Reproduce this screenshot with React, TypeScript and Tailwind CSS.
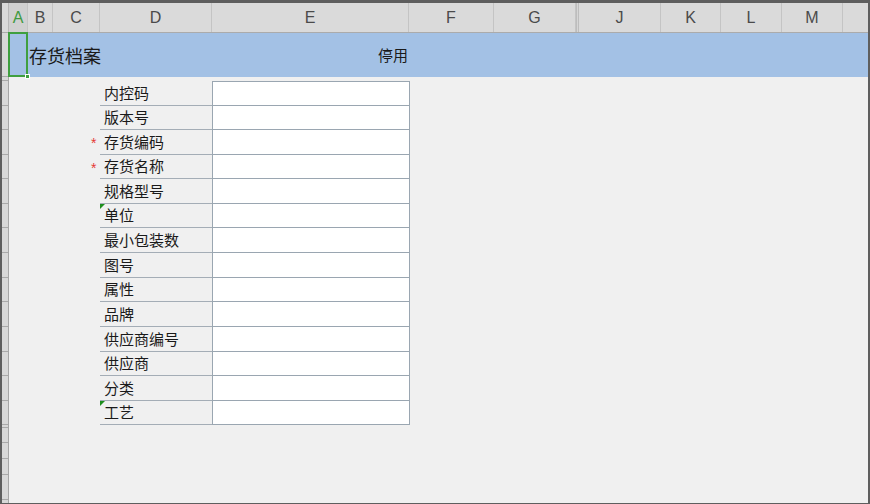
import React from "react";

interface Column {
  name: string;
  width: string;
  selected?: boolean;
}

interface Field {
  label: string;
  required?: boolean;
  noted?: boolean;
}

const columns: Column[] = [
  { name: "A", width: "w-[19px]", selected: true },
  { name: "B", width: "w-[25px]" },
  { name: "C", width: "w-[47px]" },
  { name: "D", width: "w-[112px]" },
  { name: "E", width: "w-[197px]" },
  { name: "F", width: "w-[85px]" },
  { name: "G", width: "w-[82px]" },
  { name: "", width: "w-[3px]" },
  { name: "J", width: "w-[82px]" },
  { name: "K", width: "w-[60px]" },
  { name: "L", width: "w-[61px]" },
  { name: "M", width: "w-[61px]" },
];

const fields: Field[] = [
  { label: "内控码" },
  { label: "版本号" },
  { label: "存货编码", required: true },
  { label: "存货名称", required: true },
  { label: "规格型号" },
  { label: "单位", noted: true },
  { label: "最小包装数" },
  { label: "图号" },
  { label: "属性" },
  { label: "品牌" },
  { label: "供应商编号" },
  { label: "供应商" },
  { label: "分类" },
  { label: "工艺", noted: true },
];

const tall = [true, false, true, false, true, false, true, true, false, true, true, false, true, false];

const cjk = "font-['Noto_Sans_CJK_SC','Noto_Sans',sans-serif]";

function ColumnHeader() {
  return (
    <div className="flex h-[30px] shrink-0 bg-[#dadada] border-b border-[#ababab]">
      <div className="w-[7px] shrink-0 border-r border-[#b8b8b8]" />
      {columns.map((col, idx) =>
        col.name === "" ? (
          <div key={idx} className={`${col.width} shrink-0 border-l border-r border-[#bdbdbd] bg-[#d6d6d6]`} />
        ) : (
          <div
            key={idx}
            className={`${col.width} shrink-0 flex items-center justify-center border-r border-[#c4c4c4] text-[16px] font-['Liberation_Sans',sans-serif] ${
              col.selected ? "bg-[#d0d0d0] text-[#3f9a3f]" : "text-[#4a4a4a]"
            }`}
          >
            {col.name}
          </div>
        )
      )}
      <div className="flex-1" />
    </div>
  );
}

function RowStrip() {
  const segments = [44, 4, ...tall.map((t) => (t ? 25 : 24)), 3, 15, 16, 16, 25];
  return (
    <div className="w-[7px] shrink-0 flex flex-col bg-[#d8d8d8] border-r border-[#a6a6a6]">
      {segments.map((h, idx) => (
        <div key={idx} className="border-b border-[#a9a9a9] shrink-0" style={{ height: h }} />
      ))}
    </div>
  );
}

function FormGrid() {
  return (
    <div className="flex flex-col pl-[82px] pt-[4px]">
      {fields.map((f, idx) => (
        <div key={f.label} className={`flex ${tall[idx] ? "h-[25px]" : "h-[24px]"}`}>
          <div className="w-[9px] shrink-0 flex items-start justify-start pt-[3px] text-[#e53935] text-[14px] font-['Liberation_Sans',sans-serif]">
            {f.required ? "*" : ""}
          </div>
          <div
            className={`relative w-[112px] shrink-0 flex items-center pl-[4px] border-b border-[#a4adb6] text-[15px] text-[#1a1a1a] ${cjk}`}
          >
            {f.noted && (
              <span className="absolute left-0 top-0 w-0 h-0 border-t-[5px] border-t-[#1e8e1e] border-r-[5px] border-r-transparent" />
            )}
            {f.label}
          </div>
          <div
            className={`w-[198px] shrink-0 bg-white border-l border-r border-b border-[#9aa6b1] ${
              idx === 0 ? "border-t" : ""
            }`}
          />
        </div>
      ))}
    </div>
  );
}

export default function App() {
  return (
    <div className="w-[870px] h-[504px] bg-[#5e5e5e] pt-[3px] pl-[2px] pr-[2px] pb-[1px]">
      <div className="h-full flex flex-col bg-[#f0f0f0] overflow-hidden">
        <ColumnHeader />
        <div className="flex flex-1">
          <RowStrip />
          <div className="relative flex-1 flex flex-col">
            {/* title band */}
            <div className={`h-[44px] shrink-0 flex items-center bg-[#a3c1e5] ${cjk}`}>
              <div className="w-[20px] shrink-0" />
              <div className="w-[184px] shrink-0 text-[18px] text-[#1a1a1a]">存货档案</div>
              <div className="w-[198px] shrink-0 text-right pr-[3px] text-[15px] text-[#1a1a1a]">停用</div>
            </div>
            <FormGrid />

            {/* active cell outline */}
            <div className="absolute left-[-1px] top-[-1px] w-[20px] h-[45px] border-2 border-[#3f9f3f]" />
            <div className="absolute left-[16px] top-[41px] w-[5px] h-[5px] bg-[#3f9f3f] border border-white" />
          </div>
        </div>
      </div>
    </div>
  );
}
